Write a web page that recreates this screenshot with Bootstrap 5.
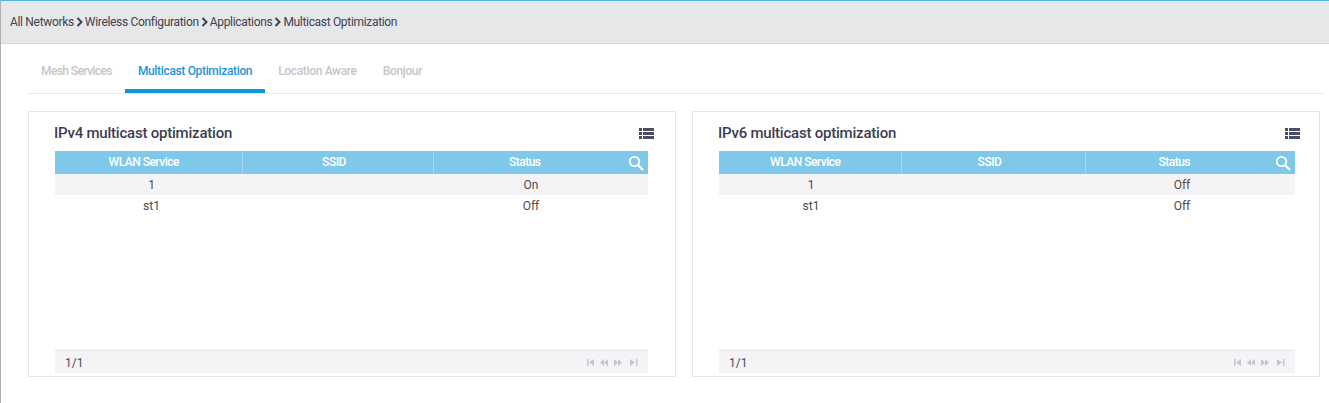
<!DOCTYPE html>
<html lang="en"><head><meta charset="utf-8"><title>Multicast Optimization</title>
<link href="https://cdn.jsdelivr.net/npm/bootstrap@5.3.0/dist/css/bootstrap.min.css" rel="stylesheet">
<style>
html,body{height:403px;overflow:hidden}
body{font-family:"Roboto","Liberation Sans",sans-serif;font-size:12px;color:#4a4d5a;background:#fff;border-left:1px solid #b0b0b0;border-top:1px solid #4fb3e0}
.crumbbar{height:43px;background:#e6e7e8;border-bottom:1px solid #d6d7d8;padding-left:9px;color:#3f4250;padding-bottom:1px;letter-spacing:-.32px}
.crumbbar svg{margin:0 2px 0 2px}
.tabstrip{margin:0 6px 0 26px;height:50px;border-bottom:1px solid #e6e7e8}
.tabitem{height:49px;padding:20px 13px 0;color:#c4c6c9;font-weight:500;font-size:12px;line-height:15px;letter-spacing:-.34px;border-bottom:4px solid transparent}
.tabitem:first-child{padding-left:14px;letter-spacing:-.6px}
.tabitem.on{color:#1f95d6;border-bottom-color:#0e96d8}
.panels{display:grid;grid-template-columns:648px 628px;gap:16px;margin:17px 0 0 27px}
.panelbox{height:266px;border:1px solid #e3e4e6;padding:11px 24px 3px 26px;display:flex;flex-direction:column}
.panelbox.first{padding-right:27px}
.paneltitle{font-size:15px;font-weight:500;color:#3d4050;line-height:20px;height:28px;margin-left:-1px;letter-spacing:-.22px}
.grid4{width:100%;table-layout:fixed;border-collapse:collapse;margin:0;font-size:12px;line-height:15px}
.grid4 th{height:23px;background:#7fc8ea;color:#fff;font-weight:500;letter-spacing:-.5px;text-align:center;padding:0;border-left:1px solid #a5d9f1;position:relative}
.grid4 th:first-child{border-left:0;padding-right:9px}
.grid4 th:nth-child(2){padding-right:7px}
.grid4 th:nth-child(3){padding-right:32px}
.grid4 td{height:21px;text-align:center;padding:1px 0 0;color:#4f4a4c}
.grid4 td:first-child{padding-left:2px}
.first .grid4 td:first-child{padding-left:6px}
.grid4 td:nth-child(3){padding-right:16px}
.first .grid4 td:nth-child(3){padding-right:19px}
.grid4 tr.alt td{background:#f4f4f6}
.srch{position:absolute;right:4px;top:4px}
.pager{margin-top:auto;height:23px;background:#f4f4f6;border-top:1px solid #e6e8ec;padding:1px 9px 0 10px;color:#4a4d5a;font-size:12px}
.listicon{margin:5px -6px 0 0}
.panelbox + .panelbox .listicon{margin-right:-5px}
</style></head><body>
<div class="crumbbar d-flex align-items-center">
<span>All Networks</span><svg width="7" height="10" viewBox="0 0 7 10"><path d="M1.500 1l4 4-4 4" fill="none" stroke="#3f4250" stroke-width="2"/></svg>
<span>Wireless Configuration</span><svg width="7" height="10" viewBox="0 0 7 10"><path d="M1.500 1l4 4-4 4" fill="none" stroke="#3f4250" stroke-width="2"/></svg>
<span>Applications</span><svg width="7" height="10" viewBox="0 0 7 10"><path d="M1.500 1l4 4-4 4" fill="none" stroke="#3f4250" stroke-width="2"/></svg>
<span>Multicast Optimization</span>
</div>
<div class="tabstrip d-flex">
<div class="tabitem">Mesh Services</div><div class="tabitem on">Multicast Optimization</div><div class="tabitem">Location Aware</div><div class="tabitem">Bonjour</div>
</div>
<div class="panels">
<section class="panelbox first">
<div class="paneltitle d-flex justify-content-between"><span>IPv4 multicast optimization</span>
<svg class="listicon" width="15" height="11" viewBox="0 0 15 11"><path d="M0 0h3v3H0zM4 0h11v3H4zM0 4h3v3H0zM4 4h11v3H4zM0 8h3v3H0zM4 8h11v3H4z" fill="#4a4d66"/></svg></div>
<table class="grid4"><colgroup><col style="width:187px"><col style="width:191px"><col></colgroup>
<thead><tr><th>WLAN Service</th><th>SSID</th><th>Status<svg class="srch" width="16" height="16" viewBox="0 0 16 16"><circle cx="6.500" cy="6.500" r="4.700" fill="none" stroke="#fff" stroke-width="1.8"/><path d="M10 10l5 5" stroke="#fff" stroke-width="2.400"/></svg></th></tr></thead>
<tbody><tr class="alt"><td>1</td><td></td><td>On</td></tr><tr><td>st1</td><td></td><td>Off</td></tr></tbody></table>
<div class="pager d-flex justify-content-between align-items-center"><span>1/1</span>
<svg width="52" height="7" viewBox="0 0 52 7" fill="#c4c6ca"><path d="M0 0h1.500v7H0zM2 3.500L7 0v7zM13 3.500L17 0v7zM17 3.500L21 0v7zM27 0l4 3.500-4 3.500zM31 0l4 3.500-4 3.500zM43 0l5 3.500-5 3.500zM49 0h1.500v7H49z"/></svg></div>
</section>
<section class="panelbox">
<div class="paneltitle d-flex justify-content-between"><span>IPv6 multicast optimization</span>
<svg class="listicon" width="15" height="11" viewBox="0 0 15 11"><path d="M0 0h3v3H0zM4 0h11v3H4zM0 4h3v3H0zM4 4h11v3H4zM0 8h3v3H0zM4 8h11v3H4z" fill="#4a4d66"/></svg></div>
<table class="grid4"><colgroup><col style="width:182px"><col style="width:184px"><col></colgroup>
<thead><tr><th>WLAN Service</th><th>SSID</th><th>Status<svg class="srch" width="16" height="16" viewBox="0 0 16 16"><circle cx="6.500" cy="6.500" r="4.700" fill="none" stroke="#fff" stroke-width="1.8"/><path d="M10 10l5 5" stroke="#fff" stroke-width="2.400"/></svg></th></tr></thead>
<tbody><tr class="alt"><td>1</td><td></td><td>Off</td></tr><tr><td>st1</td><td></td><td>Off</td></tr></tbody></table>
<div class="pager d-flex justify-content-between align-items-center"><span>1/1</span>
<svg width="52" height="7" viewBox="0 0 52 7" fill="#c4c6ca"><path d="M0 0h1.500v7H0zM2 3.500L7 0v7zM13 3.500L17 0v7zM17 3.500L21 0v7zM27 0l4 3.500-4 3.500zM31 0l4 3.500-4 3.500zM43 0l5 3.500-5 3.500zM49 0h1.500v7H49z"/></svg></div>
</section>
</div>
<script src="https://cdn.jsdelivr.net/npm/bootstrap@5.3.0/dist/js/bootstrap.bundle.min.js"></script>
</body></html>
